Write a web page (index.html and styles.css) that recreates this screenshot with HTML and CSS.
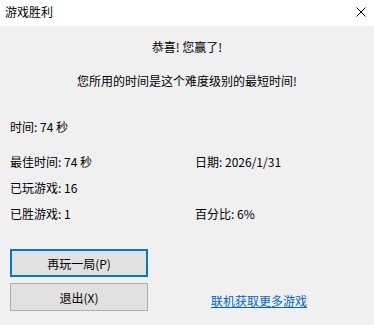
FILE: index.html
```html
<!DOCTYPE html>
<html lang="zh-CN">
<head>
    <meta charset="UTF-8">
    <meta name="viewport" content="width=device-width, initial-scale=1.0">
    <title>游戏胜利</title>
    <link rel="stylesheet" href="styles.css">
</head>
<body>
    <div class="window">
        <div class="titlebar">
            <span class="title">游戏胜利</span>
            <svg class="close" width="10" height="10" viewBox="0 0 10 10">
                <path d="M0.5 0.5 L9.5 9.5 M9.5 0.5 L0.5 9.5" stroke="#000" stroke-width="1" fill="none"/>
            </svg>
        </div>
        <div class="content">
            <p class="msg">恭喜! 您赢了!</p>
            <p class="msg second">您所用的时间是这个难度级别的最短时间!</p>
            <p class="time">时间: 74 秒</p>
            <div class="stats">
                <span>最佳时间: 74 秒</span>
                <span>日期: 2026/1/31</span>
                <span>已玩游戏: 16</span>
                <span></span>
                <span>已胜游戏: 1</span>
                <span>百分比: 6%</span>
            </div>
            <div class="bottom">
                <div class="buttons">
                    <button class="btn primary">再玩一局(P)</button>
                    <button class="btn">退出(X)</button>
                </div>
                <a class="more" href="#">联机获取更多游戏</a>
            </div>
        </div>
    </div>
</body>
</html>
```

FILE: styles.css
```css
body {
    margin: 0;
    background: #f0f0f0;
    font-family: "Microsoft YaHei UI", "Noto Sans CJK SC", "Noto Sans", sans-serif;
    font-size: 12px;
    color: #000;
}
.window {
    width: 374px;
    height: 325px;
    overflow: hidden;
}
.titlebar {
    height: 26px;
    background: #fff;
    display: flex;
    align-items: center;
    justify-content: space-between;
    padding: 0 8px 0 5px;
}
.title {
    line-height: 16px;
    margin-top: -2px;
}
.close {
    margin-top: -2px;
}
.content {
    padding: 0 10px;
}
p {
    margin: 0;
    line-height: 16px;
}
.msg {
    text-align: center;
    margin-top: 13px;
}
.msg.second {
    margin-top: 18px;
}
.time {
    margin-top: 30px;
}
.stats {
    display: grid;
    grid-template-columns: 185px 1fr;
    row-gap: 10px;
    line-height: 16px;
    margin-top: 19px;
}
.bottom {
    display: flex;
    margin-top: 27px;
}
.buttons {
    display: flex;
    flex-direction: column;
    gap: 6px;
    width: 138px;
}
.btn {
    height: 28px;
    background: #e1e1e1;
    border: 1px solid #adadad;
    font-family: inherit;
    font-size: 12px;
    color: #000;
    padding: 0;
}
.btn.primary {
    border: 2px solid #0078d7;
}
.more {
    align-self: flex-end;
    margin-left: 63px;
    margin-bottom: 2px;
    line-height: 16px;
    color: #0066cc;
    text-decoration: underline;
}
```
